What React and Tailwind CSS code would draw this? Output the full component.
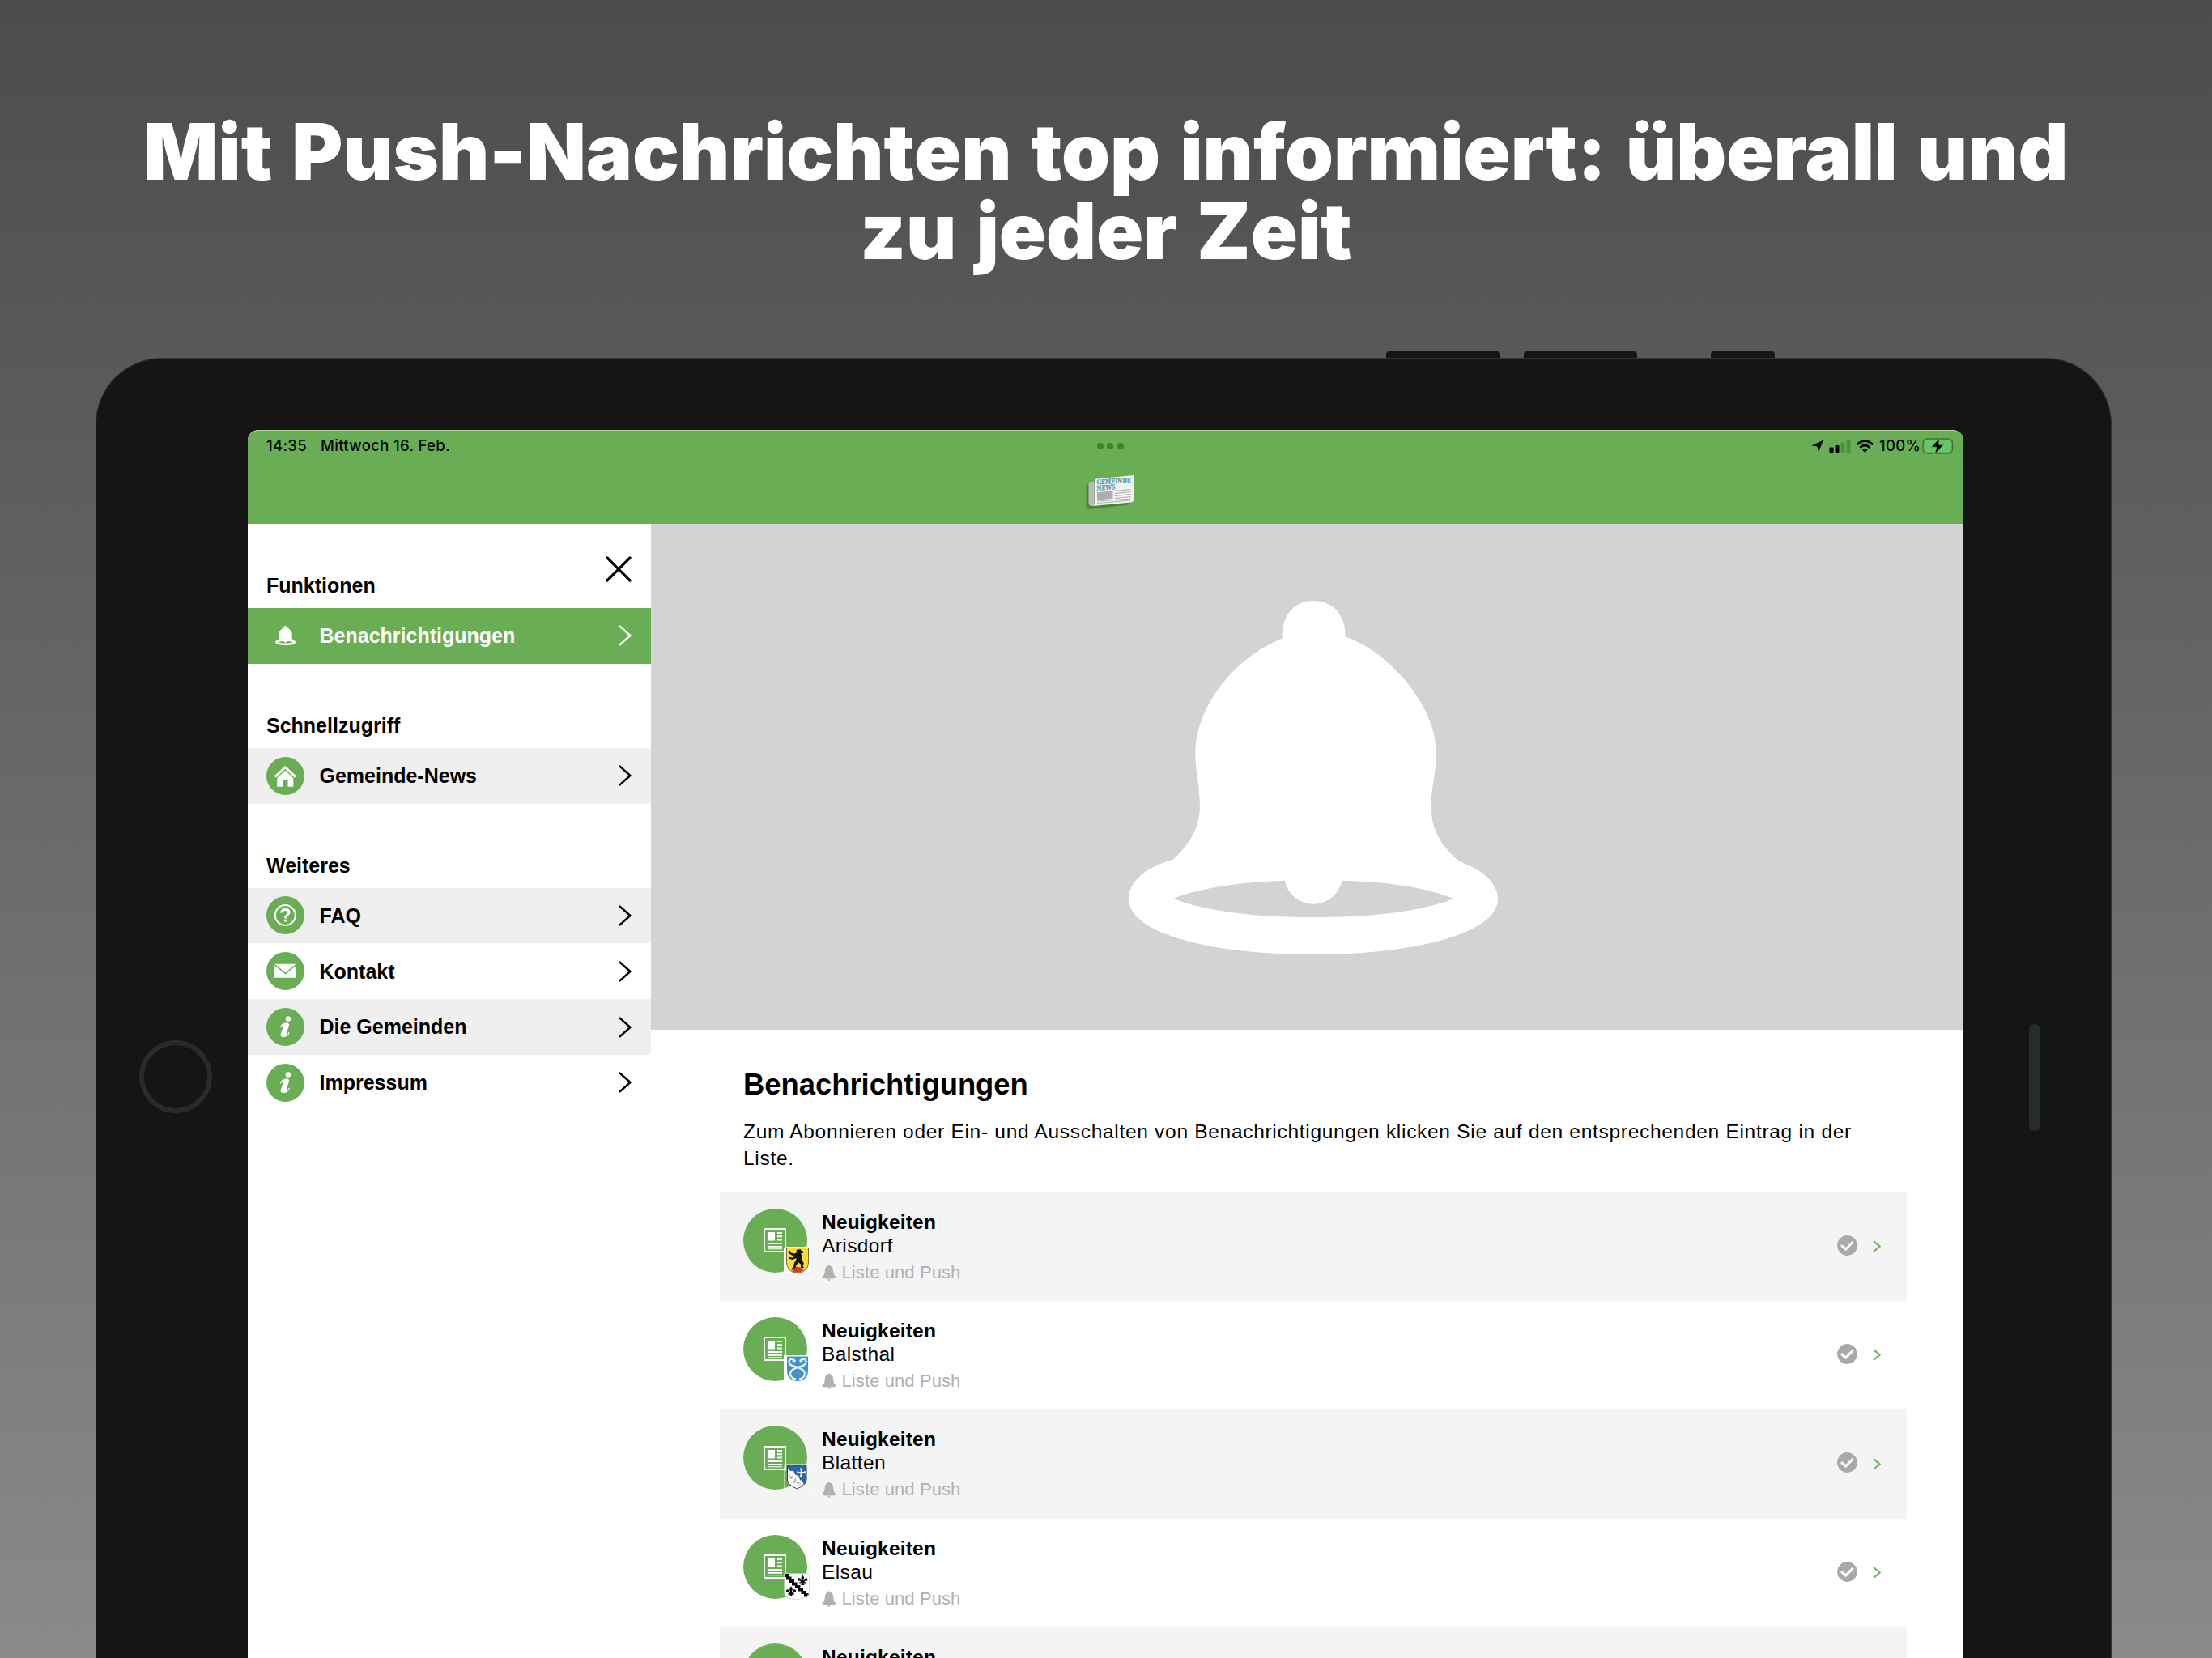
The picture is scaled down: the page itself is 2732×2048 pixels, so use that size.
import React from 'react';

const menuSections = [
  {
    title: 'Funktionen',
    items: [{ name: 'Benachrichtigungen', icon: 'bell', active: true }],
  },
  {
    title: 'Schnellzugriff',
    items: [{ name: 'Gemeinde-News', icon: 'home' }],
  },
  {
    title: 'Weiteres',
    items: [
      { name: 'FAQ', icon: 'faq' },
      { name: 'Kontakt', icon: 'mail' },
      { name: 'Die Gemeinden', icon: 'info' },
      { name: 'Impressum', icon: 'info' },
    ],
  },
];

const subscriptions = [
  { town: 'Arisdorf', crest: 'arisdorf' },
  { town: 'Balsthal', crest: 'balsthal' },
  { town: 'Blatten', crest: 'blatten' },
  { town: 'Elsau', crest: 'elsau' },
  { town: '', crest: null },
];

const BellIcon = ({ className }) => (
  <svg className={className} viewBox="102 124 1369 1312" preserveAspectRatio="none" fill="currentColor">
    <path
      fillRule="evenodd"
      d="M671 264C668 180 715 124 787 124C860 124 909 180 904 257C1085 320 1242 530 1242 680C1242 780 1224 800 1224 890C1224 975 1262 1035 1329 1091C1420 1125 1471 1175 1471 1230C1471 1355 1170 1436 787 1436C400 1436 102 1355 102 1230C102 1165 165 1112 268 1083C330 1025 366 965 366 885C366 800 349 760 349 690C349 530 480 340 671 264ZM268 1229C380 1273 560 1298 787 1298C1010 1298 1195 1275 1307 1229C1210 1190 1070 1166 893 1162C880 1215 838 1249 787 1249C735 1249 692 1213 681 1162C500 1167 350 1195 268 1229Z"
    />
  </svg>
);

const SmallBellIcon = ({ className }) => (
  <svg className={className} viewBox="0 0 18 20" fill="currentColor">
    <path d="M9 0.4C10 0.4 10.5 1 10.6 1.8C13 2.6 14 4.6 14.2 7.4C14.4 11 15 13.2 17.5 15.2C17.9 16.2 17 16.7 16 16.9C11.5 17.6 6.5 17.6 2 16.9C1 16.7 0.1 16.2 0.5 15.2C3 13.2 3.6 11 3.8 7.4C4 4.6 5 2.6 7.4 1.8C7.5 1 8 0.4 9 0.4Z" />
    <path d="M7.3 18.2H10.7C10.5 19.2 9.9 19.7 9 19.7C8.1 19.7 7.5 19.2 7.3 18.2Z" />
  </svg>
);

const Chevron = ({ className }) => (
  <svg className={className} viewBox="0 0 16 26" fill="none" stroke="currentColor" strokeWidth="2.5" strokeLinecap="round" strokeLinejoin="round">
    <path d="M1.6 1.6L14.4 13L1.6 24.4" />
  </svg>
);

const MenuIcon = ({ icon }) => {
  if (icon === 'bell') {
    return (
      <span className="flex h-[47px] w-[47px] items-center justify-center text-white">
        <BellIcon className="h-6 w-[25px]" />
      </span>
    );
  }
  return (
    <svg className="h-[47px] w-[47px]" viewBox="0 0 47 47">
      <circle cx="23.5" cy="23.5" r="23.5" fill="#69ae55" />
      {icon === 'home' && (
        <g fill="#fff">
          <path d="M23.3 10.7L37 23.6L35 25.7L23.3 14.7L11.7 25.7L9.7 23.6Z" />
          <path d="M23.3 16.7L33.3 26V36.7H26.5V28.3H20.3V36.7H13.3V26Z" />
        </g>
      )}
      {icon === 'faq' && (
        <g fill="none" stroke="#fff">
          <circle cx="23.3" cy="23.5" r="12.5" strokeWidth="2.1" />
          <path d="M18.8 20.5C18.8 17.6 20.4 16.4 23.4 16.4C26.3 16.4 28 17.7 28 20C28 23.3 23.4 23 23.4 27.5" strokeWidth="3" />
          <path d="M23.4 28.8V31.6" strokeWidth="3.2" />
        </g>
      )}
      {icon === 'mail' && (
        <g fill="#fff">
          <path d="M10.3 14.8H36.7L23.5 25.6Z" />
          <path d="M10 16.5L23.5 27.6L37 16.5V31.7H10Z" />
        </g>
      )}
      {icon === 'info' && (
        <g fill="#fff">
          <circle cx="26.9" cy="13.4" r="3.2" />
          <path d="M16.8 24.1C18.4 20.3 21 18.2 24.6 18.2C27.4 18.2 28.5 19.6 27.8 22.3L24.6 32.2C24.3 33.3 25 33.5 25.8 32.7C26.6 31.9 27.2 31 27.7 29.9L28.8 30.3C27.5 33.9 25 36.1 21.4 36.1C18.2 36.1 17 34.6 17.8 32.1L21.1 22C21.4 20.9 20.8 20.9 20 21.7C19.2 22.4 18.6 23.4 18 24.5Z" />
        </g>
      )}
    </svg>
  );
};

const NewsIcon = () => (
  <svg className="mr-px h-[30px] w-7" viewBox="0 0 28 30">
    <rect x="1" y="1" width="26" height="28" fill="none" stroke="#fff" strokeWidth="2" />
    <path d="M5 5H14V15.5H5ZM17 5H23V7H17ZM17 9.2H23V11.2H17ZM17 13.4H23V15.4H17ZM5 18H23V20H5ZM5 22H23V23.8H5ZM5 25.3H23V26.3H5Z" fill="#fff" />
  </svg>
);

const Fleur = ({ x, y }) => (
  <g transform={`translate(${x} ${y})`} fill="#0b0b0b">
    <path d="M0 -6.5C2.6 -3.8 1.8 -1.6 1 0H2C2 -2.4 5 -4 6 -1.3C6.3 0.7 4.3 1.3 4 0.2C2.8 0.7 2.6 1.5 2 2.2H4V3.6H1.3C1.3 5 2 5.5 2.6 6H-2.6C-2 5.5 -1.3 5 -1.3 3.6H-4V2.2H-2C-2.6 1.5 -2.8 0.7 -4 0.2C-4.3 1.3 -6.3 0.7 -6 -1.3C-5 -4 -2 -2.4 -2 0H-1C-1.8 -1.6 -2.6 -3.8 0 -6.5Z" />
  </g>
);

const Crest = ({ name }) => (
  <svg className="absolute left-[50px] top-[47px] h-[33px] w-[33px]" viewBox="0 0 33 33">
    {name === 'arisdorf' && (
      <>
        <rect width="33" height="33" rx="2" fill="#fff" />
        <path d="M3.5 1.5H30.5V19C30.5 27 25 32 17 32.3C9 32 3.5 27 3.5 19Z" fill="#f8dc3c" stroke="#665a2b" strokeWidth="0.9" />
        <path d="M9.5 28C11 25 14 26 16 24.5C19 25 22 25.5 25 28C23 30.6 20 31.6 17 31.7C14 31.6 11 30.5 9.5 28Z" fill="#d63b2c" />
        <path d="M15.5 4.5L17.5 3L19 3.6L20.5 2.7L21.3 4.5L24.5 6L24 7.8L21 8.2L22.8 12L23 17L24.8 20.5L23.5 23.5L25 26H21L21.3 22L18.5 19.5L15.5 22.5L14.2 26.5L10 27L12.3 24L13 20L15.3 16.5L15.5 14L11 16L6 14.8L7 13L10.5 13.5L14 11.3L10.5 10.8L6.5 8.5L5.5 5.5L8 5L9 7.5L13 8.5L16 7.5Z" fill="#15120c" />
      </>
    )}
    {name === 'balsthal' && (
      <>
        <rect width="33" height="33" fill="#fff" />
        <path d="M4 1.5H30V19C30 27 25 32 17 32C9 32 4 27 4 19Z" fill="#3f92cf" />
        <path
          d="M13 6.5C10 3 6 5 6.5 9C7.500 14.500 17 13.500 22.500 17.500C28 21.500 26.500 28.500 19 29.500M21 6.500C24 3 28 5 27.500 9C26.500 14.500 17 13.500 11.500 17.500C6 21.500 7.500 28.500 15 29.500"
          fill="none"
          stroke="#eef3ea"
          strokeWidth="2.2"
        />
        <path d="M11 4.5L15 6L14 8.5L10.5 8ZM23 4.5L19 6L20 8.5L23.5 8Z" fill="#eef3ea" />
      </>
    )}
    {name === 'blatten' && (
      <>
        <rect x="0.7" y="0.7" width="31.6" height="31.6" rx="2" fill="none" stroke="#fff" strokeOpacity="0.5" strokeWidth="1.2" />
        <path d="M4.5 2.5Q11 4 16 2Q21 4 28 2.5V19C28 25 22 28 16.5 31C10 28 4.5 25 4.5 19Z" fill="#fff" />
        <path d="M4.5 2.5Q11 4 16 2Q21 4 28 2.5V19C28 22 27 24 25 26L22.5 21L20 20L18 15L14 13.5L12 9L8 9L4.5 5Z" fill="#2b65b1" />
        <path d="M21.5 5.5V16M16.5 10.7H26.7M20 6.3H23M20 15H23M17.3 9.2V12.2M25.8 9.2V12.2" stroke="#fff" strokeWidth="1.6" fill="none" />
        <path d="M7 13L9 19L10 15L13 24L14 18L18 27L18 22L21 26" fill="none" stroke="#777" strokeWidth="0.6" />
        <path d="M4.5 2.5Q11 4 16 2Q21 4 28 2.5V19C28 25 22 28 16.5 31C10 28 4.5 25 4.5 19Z" fill="none" stroke="#333c47" strokeWidth="1" />
      </>
    )}
    {name === 'elsau' && (
      <>
        <path d="M0.8 0.8H31.5V24C31.5 30 26 32 16 32.3C6 32 0.8 30 0.8 24Z" fill="#fff" stroke="#cfcfcf" strokeWidth="0.8" />
        <path d="M1 1H6V4.5H9.5V8H13V11.5H16.5V15H20.5V18.5H24V22H27.5V25H30.5V27.5H29V29.5H25V26H21.5V22.5H18V19H14V15.5H10V12H6.5V8.5H3V5H1Z" fill="#0b0b0b" />
        <Fleur x={23.3} y={9} />
        <Fleur x={9} y={23} />
      </>
    )}
  </svg>
);

const GemeindeLogo = () => (
  <svg className="h-[44px] w-[62px] overflow-visible" viewBox="0 0 62 44">
    <path d="M0.5 12L8 8V38L56 33L53 36.5L5 42Q0.5 42 0.5 38Z" fill="#4c8539" />
    <path d="M13 4.5L59 0V30Q59 33 56 33.5L8 38Q11 37 11 33V8Q11 5 13 4.5Z" fill="#f0f1f0" />
    <path d="M3.5 9.5Q3.5 8.5 5 8.3L10.5 7.5V33Q10.5 38 7 38Q3.5 38 3.5 34Z" fill="#b9b9b9" />
    <g transform="skewY(-3.5)" fill="#5b9b9e" stroke="#5b9b9e" strokeWidth="0.3" fontFamily="DejaVu Serif, serif" fontWeight="700">
      <text x="13.5" y="12.3" fontSize="8" textLength="42.5" lengthAdjust="spacingAndGlyphs">GEMEINDE</text>
      <text x="13.5" y="19.5" fontSize="8" textLength="23" lengthAdjust="spacingAndGlyphs">NEWS</text>
    </g>
    <path d="M14 21L33.5 19.5V28.8L14 30.5Z" fill="#adadad" />
    <path d="M35.5 19.5L55.5 17.5M35.5 22.5L55.5 20.5M35.5 25.5L55.5 23.5M35.5 28.5L55.5 26.5M14 32L55.5 29M14 34.5L55.5 31" stroke="#a9a9a9" strokeWidth="0.9" />
  </svg>
);

const StatusIcons = () => (
  <svg className="h-5 w-[84px]" viewBox="0 0 84 20">
    <path d="M0.5 9.5L15 2.5L9 17.5L7.5 10.5Z" />
    <rect x="22.5" y="11.5" width="5" height="6.5" rx="1" />
    <rect x="29.5" y="9" width="5" height="9" rx="1" />
    <rect x="36.5" y="5.5" width="5" height="12.5" rx="1" opacity="0.2" />
    <rect x="43.5" y="2" width="5" height="16" rx="1" opacity="0.2" />
    <g fill="none" stroke="#000" strokeWidth="2.8">
      <path d="M56.5 8.2Q66.3 -1 76.1 8.2" />
      <path d="M60.3 12Q66.3 6.2 72.3 12" />
    </g>
    <path d="M63 14.7Q66.3 12 69.6 14.7L66.3 18Z" />
  </svg>
);

const Battery = () => (
  <svg className="h-5 w-[43px]" viewBox="0 0 43 20">
    <rect x="1" y="1" width="36.5" height="18" rx="5" fill="none" stroke="#437238" strokeWidth="1.3" />
    <rect x="3" y="3" width="32.5" height="14" rx="3.2" fill="#66c764" />
    <path d="M40 6.5Q42.5 10 40 13.5Z" fill="#437238" />
    <path d="M21.5 0L11.5 11.3H17.8L15.5 20L26.5 8.3H20.3Z" stroke="#66b058" strokeWidth="0.8" />
  </svg>
);

const StatusBar = () => (
  <div className="flex h-[38px] items-center justify-between pl-[23px] pr-[8px] font-[Inter,sans-serif] text-[18.5px] font-medium text-black">
    <div className="flex w-[500px] gap-[17px]">
      <span className="tracking-[0.3px]">14:35</span>
      <span className="tracking-[0.35px]">Mittwoch 16. Feb.</span>
    </div>
    <div className="flex gap-[4.5px]">
      <span className="h-2 w-2 rounded-full bg-[#3f8429]" />
      <span className="h-2 w-2 rounded-full bg-[#3f8429]" />
      <span className="h-2 w-2 rounded-full bg-[#3f8429]" />
    </div>
    <div className="flex w-[504px] items-center justify-end">
      <StatusIcons />
      <span className="w-[53px] tracking-[0.3px]">100%</span>
      <Battery />
    </div>
  </div>
);

const Sidebar = () => (
  <aside className="w-[498px] shrink-0 bg-white text-[25px] font-bold text-black">
    {menuSections.map((section, index) => (
      <div key={section.title}>
        <div className="flex h-[104px] justify-between pl-[23px] pr-[24.5px]">
          <h2 className="pt-[60px] leading-[32px]">{section.title}</h2>
          {index === 0 && (
            <svg className="mt-10 h-8 w-8" viewBox="0 0 32 32" stroke="#000" strokeWidth="3.3" strokeLinecap="round">
              <path d="M2 2L30 30M30 2L2 30" />
            </svg>
          )}
        </div>
        {section.items.map((item, i) => (
          <div
            key={item.name}
            className={`flex h-[68.8px] items-center pl-[23px] pr-[24px] ${
              item.active ? 'bg-[#69ae55] text-white' : i % 2 === 0 ? 'bg-[#efefef]' : 'bg-white'
            }`}
          >
            <MenuIcon icon={item.icon} />
            <span className="ml-[18.5px] flex-1 pt-px">{item.name}</span>
            <Chevron className="h-[26px] w-4" />
          </div>
        ))}
      </div>
    ))}
  </aside>
);

const SubscriptionRow = ({ entry, shaded }) => (
  <li className={`flex h-[134.4px] shrink-0 items-start pl-[29px] pr-[32px] ${shaded ? 'bg-[#f4f4f4]' : 'bg-white'}`}>
    <div className="relative mt-5 flex h-[79px] w-[79px] items-center justify-center rounded-full bg-[#69ae55]">
      <NewsIcon />
      <Crest name={entry.crest} />
    </div>
    <div className="ml-[18px] flex-1 pt-[21px]">
      <div className="text-[24.5px] font-bold leading-[32px] tracking-[0.2px]">Neuigkeiten</div>
      <div className="-mt-px h-[31px] text-[24.5px] leading-[28px] tracking-[0.4px]">{entry.town}</div>
      <div className="flex items-center text-[22px] leading-[32px] text-[#b1b1b1]">
        <SmallBellIcon className="h-5 w-[18px]" />
        <span className="ml-[6.5px] tracking-[0.1px]">Liste und Push</span>
      </div>
    </div>
    <div className="flex items-center gap-[19px] pt-[53px]">
      <svg className="h-[25px] w-[25px]" viewBox="0 0 25 25">
        <circle cx="12.5" cy="12.5" r="12.4" fill="#a9a9a9" />
        <path d="M6 13L10.7 17L18.8 8.8" fill="none" stroke={shaded ? '#f4f4f4' : '#fff'} strokeWidth="3.2" strokeLinecap="round" />
      </svg>
      <svg className="mt-[3px] h-[15px] w-[10px]" viewBox="0 0 10 15">
        <path d="M1 1L8.5 7.5L1 14" fill="none" stroke="#6fb55c" strokeWidth="2.2" />
      </svg>
    </div>
  </li>
);

const Content = () => (
  <main className="flex-1 bg-white text-black">
    <div className="flex h-[625px] justify-center bg-[#d3d3d3] pl-[14px] pt-[95px]">
      <BellIcon className="h-[437px] w-[456px] text-white" />
    </div>
    <div className="pl-[85px] pr-[70px]">
      <div className="px-[29px]">
        <h1 className="pt-[45px] text-[36.4px] font-bold leading-[46px]">Benachrichtigungen</h1>
        <p className="mb-[25.5px] mt-[18px] whitespace-nowrap text-[24.5px] leading-[33px] tracking-[0.7px]">
          Zum Abonnieren oder Ein- und Ausschalten von Benachrichtigungen klicken Sie auf den entsprechenden Eintrag in der
          <br />
          Liste.
        </p>
      </div>
      <ul>
        {subscriptions.map((entry, i) => (
          <SubscriptionRow key={i} entry={entry} shaded={i % 2 === 0} />
        ))}
      </ul>
    </div>
  </main>
);

const App = () => {
  return (
    <div className="flex h-[2048px] w-[2732px] flex-col overflow-hidden bg-linear-to-b from-[#4c4c4c] to-[#8a8a8a] font-['Liberation_Sans',Arial,sans-serif]">
      <header className="h-[434px] shrink-0 whitespace-nowrap pt-[138px] text-center font-[Inter,sans-serif] text-[96px] font-black leading-[98px] text-white [word-spacing:5px]">
        Mit Push-Nachrichten top informiert: überall und
        <br />
        zu jeder Zeit
      </header>

      {/* Hardware buttons */}
      <div className="flex h-2 shrink-0 pl-[1712px]">
        <div className="w-[141px] rounded-t bg-[#151515]" />
        <div className="ml-[29px] w-[140px] rounded-t bg-[#151515]" />
        <div className="ml-[91px] w-[79px] rounded-t bg-[#151515]" />
      </div>

      {/* Tablet */}
      <div className="ml-[118px] flex h-[1606px] w-[2490px] shrink-0 rounded-t-[82px] border border-b-0 border-[#333] bg-[#151515]">
        <div className="w-[187px] shrink-0 pl-[53px] pt-[842px]">
          <div className="h-[90px] w-[90px] rounded-full border-[6px] border-[#262c2c]" />
        </div>
        <div className="mt-[88px] flex h-[1517px] w-[2119px] shrink-0 flex-col overflow-hidden rounded-t-[13px] border-t border-[#b5cfae] bg-white">
          <div className="h-[115px] shrink-0 bg-[#69ae55]">
            <StatusBar />
            <div className="flex justify-center pl-[13px] pt-[17px]">
              <GemeindeLogo />
            </div>
          </div>
          <div className="flex flex-1">
            <Sidebar />
            <Content />
          </div>
        </div>
        <div className="pl-[81px] pt-[822px]">
          <div className="h-[132px] w-[14px] rounded-full bg-[#262c2c]" />
        </div>
      </div>
    </div>
  );
};

export default App;
